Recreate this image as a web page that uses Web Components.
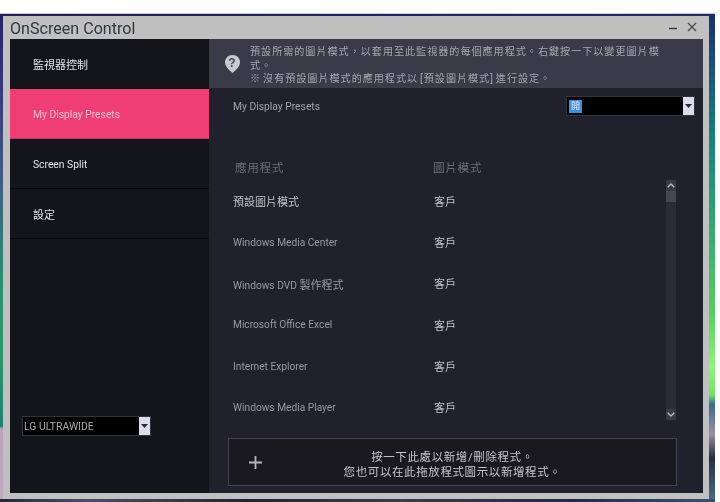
<!DOCTYPE html>
<html lang="zh-Hant"><head><meta charset="utf-8"><title>OnScreen Control</title>
<style>
html,body{margin:0;padding:0;background:#fff;width:720px;height:502px;overflow:hidden}
body{font-family:Roboto,"Noto Sans CJK TC",sans-serif}
</style></head><body>
<desk-top>
<app-window title="OnScreen Control">
  <side-bar slot="side">
    <nav-item>監視器控制</nav-item>
    <nav-item active latin>My Display Presets</nav-item>
    <nav-item latin>Screen Split</nav-item>
    <nav-item>設定</nav-item>
    <combo-box slot="foot"><span>LG ULTRAWIDE</span></combo-box>
  </side-bar>
  <info-banner slot="main">
    <div>預設所需的圖片模式，以套用至此監視器的每個應用程式。右鍵按一下以變更圖片模</div>
    <div>式。</div>
    <div>※ 沒有預設圖片模式的應用程式以 [預設圖片模式] 進行設定。</div>
  </info-banner>
  <preset-panel slot="main">
    <preset-row>預設圖片模式<span slot="mode">客戶</span></preset-row>
    <preset-row dim>Windows Media Center<span slot="mode">客戶</span></preset-row>
    <preset-row dim>Windows DVD <span style="font-size:11px">製作程式</span><span slot="mode">客戶</span></preset-row>
    <preset-row dim>Microsoft Office Excel<span slot="mode">客戶</span></preset-row>
    <preset-row dim>Internet Explorer<span slot="mode">客戶</span></preset-row>
    <preset-row dim>Windows Media Player<span slot="mode">客戶</span></preset-row>
  </preset-panel>
  <add-bar slot="main">
    <div>按一下此處以新增/刪除程式。</div>
    <div>您也可以在此拖放程式圖示以新增程式。</div>
  </add-bar>
</app-window>
</desk-top>
<script>
function def(name,html,init){
  customElements.define(name,class extends HTMLElement{
    constructor(){super();this.attachShadow({mode:"open"}).innerHTML=html;if(init)init(this);}
  });
}
const CJK='Roboto,"Noto Sans CJK TC",sans-serif';
const JP='Roboto,"Noto Sans CJK JP",sans-serif';
def("desk-top",`<style>
:host{display:flex;box-sizing:border-box;width:715px;height:489px;margin-top:13px;padding:2px 6px 3px 3px;border-top:1px solid #c9c9d4;filter:blur(.35px);
background:
 linear-gradient(90deg,#1d2a3a,#4a4f66 12%,#20242f 35%,#3a3a4a 55%,#1f2a44 80%,#3a5370) bottom/100% 3px no-repeat,
 linear-gradient(90deg,#241f5c,#23236a 50%,#1e2c6c) top/100% 3px no-repeat,
 linear-gradient(180deg,#24206a 0,#3a3f7c 18%,#3f5a86 33%,#28906f 55%,#2a9a6a 68%,#22806f 84.500%,#b8a4bc 85%,#c0a8c0 100%) left/3px 100% no-repeat,
 linear-gradient(180deg,#1c2f70 0,#1b5c78 14%,#148a7c 28%,#3cb070 48%,#58d060 62%,#8cf478 72%,#70e860 78%,#3a6a90 80%,#9a8fa8 86%,#26303c 91%,#4a6a90 100%) right/6px 100% no-repeat;}
</style><slot></slot>`);
def("app-window",`<style>
:host{flex:1;display:flex;flex-direction:column;box-sizing:border-box;background:#c0c0c0;padding:0 6px 6px 7px;min-width:0}
.t{height:23px;display:flex;align-items:center;justify-content:space-between;color:#2c3644;font:16.100px/23px Roboto,sans-serif;padding-top:2px;box-sizing:border-box}
.c{display:flex;align-items:center;gap:9px;padding:0 6px 4px 0}
.b{flex:1;display:flex;min-height:0}
.s{width:199px;display:flex}
.m{flex:1;display:flex;flex-direction:column;background:#21202d;min-width:0}
svg{display:block}
</style>
<div class="t"><span id="ti"></span><span class="c">
<svg width="10" height="10" viewBox="0 0 10 10"><path d="M1 6.500h8" stroke="#33373f" stroke-width="1.400"/></svg>
<svg width="10" height="10" viewBox="0 0 10 10"><path d="M1 1l8 8M9 1l-8 8" stroke="#4a4f58" stroke-width="1.400"/></svg>
</span></div>
<div class="b"><div class="s"><slot name="side"></slot></div><div class="m"><slot name="main"></slot></div></div>`,
el=>{queueMicrotask(()=>{el.shadowRoot.getElementById("ti").textContent=el.getAttribute("title")});});
def("side-bar",`<style>
:host{flex:1;display:flex;flex-direction:column;background:#14141b}
.f{margin-top:auto;padding:0 0 57px 12px;display:flex}
</style><slot></slot><div class="f"><slot name="foot"></slot></div>`);
def("nav-item",`<style>
:host{display:flex;align-items:center;box-sizing:border-box;height:50px;padding:1px 0 0 23px;border-bottom:1px solid #08080b;color:#e4e4e8;font:11px ${CJK}}
:host([latin]){font-size:10.300px;padding-top:1px}
:host([active]){background:#ee3e74;color:#fbc0d2;border-bottom-color:#c8305e}
</style><slot></slot>`);
def("info-banner",`<style>
:host{display:flex;align-items:center;box-sizing:border-box;height:49px;background:#3b3a48;color:#a7a7b2;font:10.100px/13.500px ${JP};letter-spacing:.98px;word-spacing:-1.500px;padding-left:15px;gap:9px;white-space:nowrap}
svg{flex:none}
.x{padding-top:4px}
</style>
<svg width="17" height="20" viewBox="0 0 17 20"><path d="M8.500 1C4.200 1 1 4.200 1 8.300c0 4 3.600 7.600 7.500 10.700C12.400 15.900 16 12.300 16 8.300 16 4.200 12.800 1 8.500 1z" fill="#c9c9d1"/><text x="8.500" y="12.500" text-anchor="middle" font-family="Liberation Sans" font-size="12" font-weight="700" fill="#44434f">?</text></svg>
<div class="x"><slot></slot></div>`);
def("combo-box",`<style>
:host{display:flex;box-sizing:border-box;width:129px;height:20px;background:#000;border:1px solid #33333a;color:#a9a9ac;font:10.400px ${CJK}}
.v{flex:1;display:flex;align-items:center;padding-left:1px;min-width:0}
.a{width:11px;background:#dcdcee;display:flex;align-items:center;justify-content:center;flex:none}
</style><div class="v"><slot></slot></div><div class="a"><svg width="7" height="4" viewBox="0 0 7 4"><path d="M0 0h7L3.500 4z" fill="#2a2a30"/></svg></div>`);
def("preset-row",`<style>
:host{display:flex;align-items:center;box-sizing:border-box;height:41.330px;color:#c2c2c8;font:11px ${CJK};white-space:nowrap}
:host([dim]){color:#9a9aa4;font-size:10.200px}
.a{width:201px;padding-top:.6px}
.b{color:#c2c2c8;font-size:11px}
</style><div class="a"><slot></slot></div><div class="b"><slot name="mode"></slot></div>`);
def("scroll-bar",`<style>
:host{display:flex;flex-direction:column;width:10px;height:240px;background:#2c2b36}
.b{height:11px;background:#3a3946;display:flex;align-items:center;justify-content:center}
.th{height:11px;background:#464552}
.g{flex:1}
</style><div class="b"><svg width="8" height="5" viewBox="0 0 8 5"><path d="M.7 4.300L4 1l3.300 3.300" fill="none" stroke="#b9b9c6" stroke-width="1.300"/></svg></div><div class="th"></div><div class="g"></div>
<div class="b"><svg width="8" height="5" viewBox="0 0 8 5"><path d="M.7.700L4 4 7.300.700" fill="none" stroke="#b9b9c6" stroke-width="1.300"/></svg></div>`);
def("preset-panel",`<style>
:host{display:flex;flex-direction:column;flex:none;box-sizing:border-box;padding-left:24px;color:#9a9aa4;font:11px ${CJK}}
.top{display:flex;justify-content:space-between;align-items:center;height:20px;margin-top:8px;padding-right:8px;color:#a2a2aa;font-size:10.300px}
.top>span{padding-top:1px}
.sel{display:flex;align-items:center;justify-content:center;width:13px;height:13px;background:#3d8fe6;color:#dfe9ff;font-size:9px;margin-left:1px;line-height:13px}
.hd{display:flex;height:20px;margin-top:41px;padding-bottom:2px;box-sizing:border-box;align-items:center;color:#6d6d78;font-size:11.700px;letter-spacing:.6px;padding-left:2px}
.hd span:first-child{width:198px}
.lst{display:flex;margin-top:3px;height:240px}
.rows{flex:1;overflow:hidden;height:240px}
scroll-bar{margin-right:27px;flex:none}
</style>
<div class="top"><span>My Display Presets</span><combo-box><span class="sel">開</span></combo-box></div>
<div class="hd"><span>應用程式</span><span>圖片模式</span></div>
<div class="lst"><div class="rows"><slot></slot></div><scroll-bar></scroll-bar></div>`);
def("add-bar",`<style>
:host{display:flex;align-items:center;box-sizing:border-box;height:48px;margin:18px 26px 0 19px;background:#1a191f;border:1px solid #45444e;color:#c6c6cc;font:11.500px/15px ${JP};letter-spacing:.6px}
svg{flex:none;margin-left:20px}
.x{flex:1;text-align:center;padding:5px 33px 0 0}
</style>
<svg width="13" height="13" viewBox="0 0 13 13"><path d="M6.500 0v13M0 6.500h13" stroke="#b6b6be" stroke-width="1.800"/></svg>
<div class="x"><slot></slot></div>`);
</script>
</body></html>
